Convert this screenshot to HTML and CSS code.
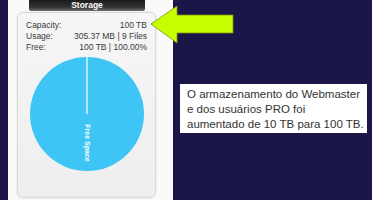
FILE: index.html
```html
<!DOCTYPE html>
<html lang="pt">
<head>
    <meta charset="UTF-8">
    <title>Storage</title>
    <link rel="stylesheet" href="styles.css">
</head>
<body>
    <div class="page">
        <div class="side">
            <div class="tab">Storage</div>
            <div class="card">
                <div class="row"><span>Capacity:</span><span>100 TB</span></div>
                <div class="row"><span>Usage:</span><span>305.37 MB | 9 Files</span></div>
                <div class="row"><span>Free:</span><span>100 TB | 100.00%</span></div>
                <div class="pie">
                    <svg width="114" height="114" viewBox="0 0 114 114">
                        <circle cx="57" cy="57" r="57" fill="#3ec5f6"/>
                        <line x1="57" y1="0" x2="57" y2="57" stroke="#ffffff" stroke-width="1.2"/>
                        <text x="0" y="0" transform="translate(54.5 86) rotate(90)" class="pieLabel" text-anchor="middle">Free Space</text>
                    </svg>
                </div>
            </div>
        </div>
        <div class="main">
            <div class="note">
                O armazenamento do Webmaster<br>
                e dos usuários PRO foi<br>
                aumentado de 10 TB para 100 TB.
            </div>
        </div>
    </div>
    <!-- seta por cima do conteudo -->
    <svg class="arrow" width="240" height="50" viewBox="0 0 240 50">
        <polygon points="151,24 177,6 177,15 233,15 233,33 177,33 177,43" fill="#c8ff00" stroke="#7d8f10" stroke-width="0.8"/>
    </svg>
</body>
</html>
```

FILE: styles.css
```css
*{
    padding: 0px;
    margin: 0px;
}
body{
    background: #1b1648;
    font-family: "Liberation Sans", Arial, sans-serif;
    width: 372px;
    height: 200px;
    overflow: hidden;
}
.page{
    display: flex;
    height: 200px;
}
.side{
    margin-left: 8px;
    width: 165px;
    background: #fafafa;
    height: 200px;
}
.tab{
    margin-left: 21px;
    width: 116px;
    height: 11px;
    line-height: 10px;
    background: linear-gradient(#1c1c1c, #333333 65%, #6e6e6e);
    color: #ffffff;
    font-size: 8.5px;
    font-weight: bold;
    text-align: center;
    border-radius: 0 0 2px 2px;
}
.card{
    margin-top: 1px;
    margin-left: 9px;
    width: 139px;
    height: 186px;
    box-sizing: border-box;
    background: linear-gradient(#f6f6f6, #eeeeee);
    border: 1px solid #dadada;
    border-radius: 6px;
    padding: 7px 8px 0 8px;
    box-shadow: 0 0 2px rgba(0,0,0,0.15);
}
.row{
    display: flex;
    justify-content: space-between;
    font-size: 8.5px;
    line-height: 11px;
    height: 11px;
    color: #3a3a3a;
}
.pie{
    margin-top: 4px;
    display: flex;
    justify-content: center;
}
.pieLabel{
    fill: #ffffff;
    font-size: 7px;
    font-weight: bold;
    font-family: "Liberation Sans", Arial, sans-serif;
}
.main{
    flex: 1;
}
.note{
    margin-top: 84px;
    margin-left: 7px;
    width: 187px;
    height: 49px;
    box-sizing: border-box;
    background: #ffffff;
    padding: 3px 0 0 7px;
    font-size: 11.5px;
    line-height: 15px;
    color: #333333;
    white-space: nowrap;
}
.arrow{
    position: absolute;
    left: 0px;
    top: 0px;
}
```
